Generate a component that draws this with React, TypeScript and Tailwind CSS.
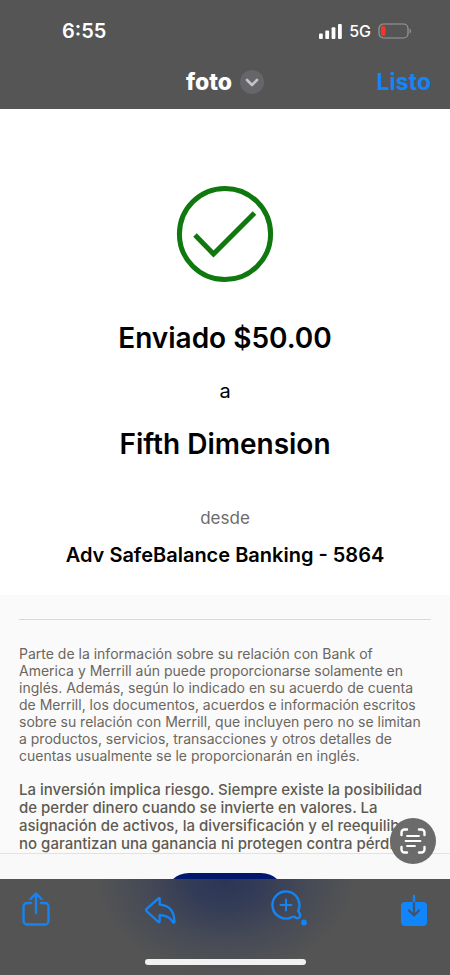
import type { ReactNode } from "react";

const LEGAL = [
  "Parte de la información sobre su relación con Bank of",
  "America y Merrill aún puede proporcionarse solamente en",
  "inglés. Además, según lo indicado en su acuerdo de cuenta",
  "de Merrill, los documentos, acuerdos e información escritos",
  "sobre su relación con Merrill, que incluyen pero no se limitan",
  "a productos, servicios, transacciones y otros detalles de",
  "cuentas usualmente se le proporcionarán en inglés.",
];

const RISK = [
  "La inversión implica riesgo. Siempre existe la posibilidad",
  "de perder dinero cuando se invierte en valores. La",
  "asignación de activos, la diversificación y el reequilibrio",
  "no garantizan una ganancia ni protegen contra pérdidas",
];

export default function App() {
  return (
    <div className="flex min-h-screen flex-col overflow-hidden bg-white font-['Inter','Liberation_Sans',sans-serif] text-black">
      <header className="bg-[#555555] text-white">
        <StatusBar />
        <TitleBar />
      </header>

      <main className="flex flex-1 flex-col">
        <Receipt />
        <Disclosures />
        {/* top edge of the next button, cut off by the toolbar */}
        <div className="flex h-[26px] items-start justify-center overflow-hidden border-t border-[#e2e2e2] bg-[#f9f9f9] pt-[19px]">
          <div className="h-12 w-[120px] shrink-0 rounded-full bg-[#00196f]" />
        </div>
      </main>

      <Toolbar />
    </div>
  );
}

function StatusBar() {
  return (
    <div className="flex h-[62px] items-center justify-between pr-[38px] pl-[62px]">
      <span className="text-[20px] leading-6 font-semibold">6:55</span>
      <div className="flex items-center gap-[7px]">
        <svg width="23" height="15" viewBox="0 0 23 15" fill="white" aria-hidden="true">
          <rect x="0" y="9.5" width="3.8" height="5.5" rx="1" />
          <rect x="6.3" y="6.5" width="3.8" height="8.5" rx="1" />
          <rect x="12.6" y="3.3" width="3.8" height="11.7" rx="1" />
          <rect x="19" y="0" width="3.8" height="15" rx="1" />
        </svg>
        <span className="text-[16px] leading-6 font-medium">5G</span>
        <svg width="34" height="16" viewBox="0 0 34 16" fill="none" aria-hidden="true">
          <rect x="1" y="1" width="29" height="14" rx="4.5" stroke="#9b9b9b" strokeWidth="1.2" />
          <rect x="3" y="3" width="4.5" height="10" rx="1.8" fill="#f5352c" />
          <path d="M31.7 5.7c1.7.7 1.7 3.9 0 4.6z" fill="#9b9b9b" />
        </svg>
      </div>
    </div>
  );
}

function TitleBar() {
  return (
    <div className="grid h-[47px] grid-cols-[1fr_auto_1fr] items-start px-[19px] pt-[6px]">
      <span />
      <button type="button" className="flex items-center gap-2 text-[23px] leading-7 font-extrabold">
        foto
        <svg width="24" height="24" viewBox="0 0 24 24" fill="none" aria-hidden="true">
          <circle cx="12" cy="12" r="12" fill="#66666a" />
          <path d="m7 10 5 5 5-5" stroke="#c4c4c8" strokeWidth="2.6" strokeLinecap="round" strokeLinejoin="round" />
        </svg>
      </button>
      <button type="button" className="justify-self-end text-[23px] leading-7 font-bold text-[#1185fb]">
        Listo
      </button>
    </div>
  );
}

function Receipt() {
  return (
    <section className="flex h-[486px] flex-col items-center pt-[76px] text-center">
      <svg width="98" height="98" viewBox="0 0 98 98" fill="none" stroke="#0f780f" aria-hidden="true">
        <circle cx="49" cy="49" r="45.6" strokeWidth="5" />
        <path d="m19 50 18.5 19 41-41" strokeWidth="5" />
      </svg>
      <h1 className="mt-[37px] text-[28px] leading-9 font-semibold">Enviado $50.00</h1>
      <p className="mt-[23px] text-[20px] leading-6">a</p>
      <h2 className="mt-[23px] text-[28px] leading-9 font-semibold">Fifth Dimension</h2>
      <p className="mt-[44px] text-[17px] leading-6 text-[#6b6b6b]">desde</p>
      <p className="mt-[13px] text-[20px] leading-6 font-semibold">Adv SafeBalance Banking - 5864</p>
    </section>
  );
}

function Disclosures() {
  return (
    <section className="relative bg-[#fafafa] px-[19px] pt-[24px] text-[#6b665e]">
      <hr className="border-[#d8d8d8]" />
      <p className="mt-[25px] text-[14px] leading-[17px]">
        <Lines lines={LEGAL} />
      </p>
      <p className="mt-[17px] text-[15px] leading-[18px] font-medium text-[#5f5a52]">
        <Lines lines={RISK} />
      </p>
      <button
        type="button"
        aria-label="Texto en vivo"
        className="absolute right-[14px] -bottom-[11px] flex size-[46px] items-center justify-center rounded-full bg-[#6b6b6b]"
      >
        <svg width="28" height="28" viewBox="0 0 28 28" fill="none" stroke="white" strokeLinecap="round" aria-hidden="true">
          <path
            d="M2.5 8V5.5a3 3 0 0 1 3-3H8M20 2.5h2.5a3 3 0 0 1 3 3V8M25.5 20v2.5a3 3 0 0 1-3 3H20M8 25.5H5.5a3 3 0 0 1-3-3V20"
            strokeWidth="2.4"
          />
          <path d="M8 9h12M6.5 14h15M8 19h8" strokeWidth="1.8" />
        </svg>
      </button>
    </section>
  );
}

function Lines({ lines }: { lines: string[] }) {
  return (
    <>
      {lines.map((line) => (
        <span key={line} className="block whitespace-nowrap">
          {line}
        </span>
      ))}
    </>
  );
}

function ToolButton({ label, children }: { label: string; children: ReactNode }) {
  return (
    <button type="button" aria-label={label} className="text-[#1683f3]">
      {children}
    </button>
  );
}

function Toolbar() {
  return (
    <footer className="flex h-24 flex-col items-center justify-between bg-[#545454] bg-[radial-gradient(ellipse_130px_96px_at_50%_0%,#2b3656_0%,#343d56_30%,#464a56_62%,#545454_100%)] pb-[10px]">
      <nav className="flex w-full items-start justify-between px-[21px] pt-[11px]">
        <ToolButton label="Compartir">
          <svg width="30" height="38" viewBox="0 0 30 38" fill="none" stroke="currentColor" strokeWidth="2.4" strokeLinecap="round" strokeLinejoin="round" aria-hidden="true">
            <path d="M10 13H6a3.5 3.5 0 0 0-3.5 3.5V31A3.5 3.5 0 0 0 6 34.5h18a3.5 3.5 0 0 0 3.500-3.500V16.500A3.5 3.5 0 0 0 24 13h-4M15 23V4M9.500 9 15 3.500 20.500 9" />
          </svg>
        </ToolButton>
        <ToolButton label="Responder">
          <svg width="34" height="38" viewBox="0 0 34 38" fill="none" stroke="currentColor" strokeWidth="2.3" strokeLinecap="round" strokeLinejoin="round" aria-hidden="true">
            <path d="M15.5 8.3c.6-.5 1.2-.2 1.2.6v5.8C26 15.2 31 20.500 31.500 31.500c0 1.700-1 1.500-1.700.3-3-5-6.500-6.500-13.100-6.700v6.200c0 .8-.7 1.200-1.400.6L3.400 21c-.6-.6-.6-1.200 0-1.800z" />
          </svg>
        </ToolButton>
        <ToolButton label="Ampliar">
          <svg width="38" height="38" viewBox="0 0 38 38" fill="none" stroke="currentColor" strokeWidth="2.4" strokeLinecap="round" strokeLinejoin="round" aria-hidden="true">
            <path d="M22.6 27.3A13.5 13.5 0 1 1 29.2 20.7c-.1 1.100 1.400 1.500 1.500 3a2.900 2.900 0 0 1-4.900 3.200c-1-.8-1.900-.1-3.200.4z" />
            <path d="M17 9.500v11M11.500 15h11" strokeWidth="2" />
            <circle cx="35" cy="32.5" r="2.9" fill="currentColor" stroke="none" />
          </svg>
        </ToolButton>
        <ToolButton label="Guardar">
          <svg width="30" height="38" viewBox="0 0 30 38" fill="none" strokeLinecap="round" strokeLinejoin="round" aria-hidden="true">
            <rect x="2" y="12" width="26" height="24" rx="4" fill="#1185fb" />
            <path d="M15 6v6" stroke="#1683f3" strokeWidth="2.4" />
            <path d="M15 13v12M10 20.500l5 5 5-5" stroke="#41546c" strokeWidth="2.2" />
          </svg>
        </ToolButton>
      </nav>
      <div className="h-[6px] w-[161px] rounded-full bg-[#f1f1f1]" />
    </footer>
  );
}
